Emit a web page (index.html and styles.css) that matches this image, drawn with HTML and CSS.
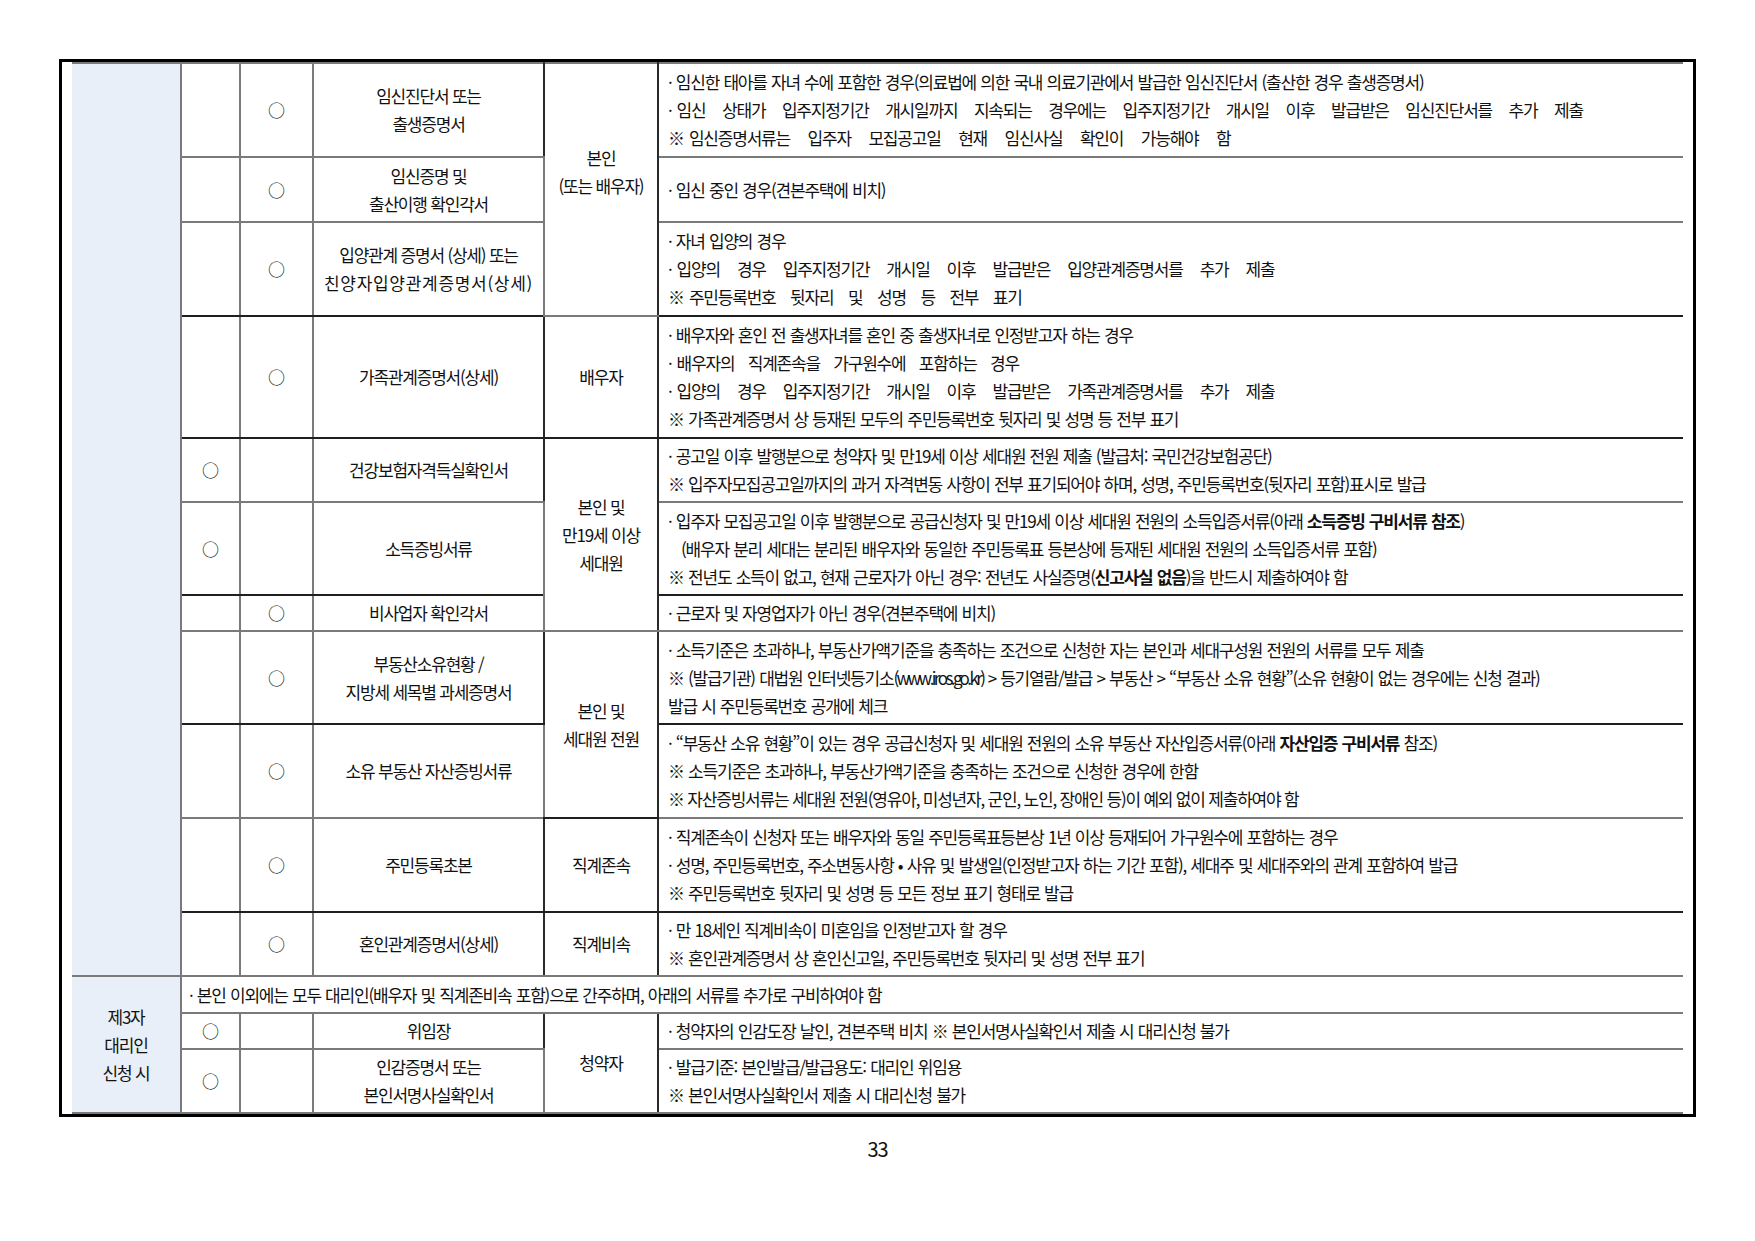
FILE: index.html
```html
<!DOCTYPE html>
<html lang="ko">
<head>
<meta charset="utf-8">
<title>구비서류 33</title>
<link rel="stylesheet" href="styles.css">
</head>
<body>
<div class="page">
  <div class="sheet">
    <table class="docs">
      <colgroup>
        <col class="c-label">
        <col class="c-mark">
        <col class="c-mark2">
        <col class="c-doc">
        <col class="c-who">
        <col class="c-note">
      </colgroup>
      <tbody>
        <tr class="r94">
          <td class="label" rowspan="11"></td>
          <td class="mark"></td>
          <td class="mark">○</td>
          <td class="doc">임신진단서 또는<br>출생증명서</td>
          <td class="who up" rowspan="3">본인<br>(또는 배우자)</td>
          <td class="note">
            <p>· 임신한 태아를 자녀 수에 포함한 경우(의료법에 의한 국내 의료기관에서 발급한 임신진단서 (출산한 경우 출생증명서)</p>
            <p class="ws-a"><span class="bul">· </span>임신 상태가 입주지정기간 개시일까지 지속되는 경우에는 입주지정기간 개시일 이후 발급받은 임신진단서를 추가 제출</p>
            <p class="ws-b"><span class="bul">※ </span>임신증명서류는 입주자 모집공고일 현재 임신사실 확인이 가능해야 함</p>
          </td>
        </tr>
        <tr class="r65">
          <td class="mark"></td>
          <td class="mark">○</td>
          <td class="doc">임신증명 및<br>출산이행 확인각서</td>
          <td class="note"><p>· 임신 중인 경우(견본주택에 비치)</p></td>
        </tr>
        <tr class="r94 dk">
          <td class="mark"></td>
          <td class="mark">○</td>
          <td class="doc">입양관계 증명서 (상세) 또는<br><span class="ws-c">친양자입양관계증명서(상세)</span></td>
          <td class="note">
            <p>· 자녀 입양의 경우</p>
            <p class="ws-f"><span class="bul">· </span>입양의 경우 입주지정기간 개시일 이후 발급받은 입양관계증명서를 추가 제출</p>
            <p class="ws-e"><span class="bul">※ </span>주민등록번호 뒷자리 및 성명 등 전부 표기</p>
          </td>
        </tr>
        <tr class="r122 dk">
          <td class="mark"></td>
          <td class="mark">○</td>
          <td class="doc">가족관계증명서(상세)</td>
          <td class="who">배우자</td>
          <td class="note">
            <p>· 배우자와 혼인 전 출생자녀를 혼인 중 출생자녀로 인정받고자 하는 경우</p>
            <p class="ws-d"><span class="bul">· </span>배우자의 직계존속을 가구원수에 포함하는 경우</p>
            <p class="ws-f"><span class="bul">· </span>입양의 경우 입주지정기간 개시일 이후 발급받은 가족관계증명서를 추가 제출</p>
            <p>※ 가족관계증명서 상 등재된 모두의 주민등록번호 뒷자리 및 성명 등 전부 표기</p>
          </td>
        </tr>
        <tr class="r64">
          <td class="mark">○</td>
          <td class="mark"></td>
          <td class="doc">건강보험자격득실확인서</td>
          <td class="who" rowspan="3">본인 및<br>만19세 이상<br>세대원</td>
          <td class="note">
            <p>· 공고일 이후 발행분으로 청약자 및 만19세 이상 세대원 전원 제출 (발급처: 국민건강보험공단)</p>
            <p>※ 입주자모집공고일까지의 과거 자격변동 사항이 전부 표기되어야 하며, 성명, 주민등록번호(뒷자리 포함)표시로 발급</p>
          </td>
        </tr>
        <tr class="r93 dk">
          <td class="mark">○</td>
          <td class="mark"></td>
          <td class="doc">소득증빙서류</td>
          <td class="note">
            <p>· 입주자 모집공고일 이후 발행분으로 공급신청자 및 만19세 이상 세대원 전원의 소득입증서류(아래 <b>소득증빙 구비서류 참조</b>)</p>
            <p class="indent">(배우자 분리 세대는 분리된 배우자와 동일한 주민등록표 등본상에 등재된 세대원 전원의 소득입증서류 포함)</p>
            <p>※ 전년도 소득이 없고, 현재 근로자가 아닌 경우: 전년도 사실증명(<b>신고사실 없음</b>)을 반드시 제출하여야 함</p>
          </td>
        </tr>
        <tr class="r36">
          <td class="mark"></td>
          <td class="mark">○</td>
          <td class="doc">비사업자 확인각서</td>
          <td class="note"><p>· 근로자 및 자영업자가 아닌 경우(견본주택에 비치)</p></td>
        </tr>
        <tr class="r93 dk">
          <td class="mark"></td>
          <td class="mark">○</td>
          <td class="doc">부동산소유현황 /<br>지방세 세목별 과세증명서</td>
          <td class="who" rowspan="2">본인 및<br>세대원 전원</td>
          <td class="note">
            <p>· 소득기준은 초과하나, 부동산가액기준을 충족하는 조건으로 신청한 자는 본인과 세대구성원 전원의 서류를 모두 제출</p>
            <p>※ (발급기관) 대법원 인터넷등기소<span class="url">(www.iros.go.kr)</span> &gt; 등기열람/발급 &gt; 부동산 &gt; “부동산 소유 현황”(소유 현황이 없는 경우에는 신청 결과)</p>
            <p>발급 시 주민등록번호 공개에 체크</p>
          </td>
        </tr>
        <tr class="r94">
          <td class="mark"></td>
          <td class="mark">○</td>
          <td class="doc">소유 부동산 자산증빙서류</td>
          <td class="note">
            <p>· “부동산 소유 현황”이 있는 경우 공급신청자 및 세대원 전원의 소유 부동산 자산입증서류(아래 <b>자산입증 구비서류</b> 참조)</p>
            <p>※ 소득기준은 초과하나, 부동산가액기준을 충족하는 조건으로 신청한 경우에 한함</p>
            <p class="tight">※ 자산증빙서류는 세대원 전원(영유아, 미성년자, 군인, 노인, 장애인 등)이 예외 없이 제출하여야 함</p>
          </td>
        </tr>
        <tr class="r94 dk">
          <td class="mark"></td>
          <td class="mark">○</td>
          <td class="doc">주민등록초본</td>
          <td class="who">직계존속</td>
          <td class="note">
            <p>· 직계존속이 신청자 또는 배우자와 동일 주민등록표등본상 1년 이상 등재되어 가구원수에 포함하는 경우</p>
            <p>· 성명, 주민등록번호, 주소변동사항 • 사유 및 발생일(인정받고자 하는 기간 포함), 세대주 및 세대주와의 관계 포함하여 발급</p>
            <p>※ 주민등록번호 뒷자리 및 성명 등 모든 정보 표기 형태로 발급</p>
          </td>
        </tr>
        <tr class="r64">
          <td class="mark"></td>
          <td class="mark">○</td>
          <td class="doc">혼인관계증명서(상세)</td>
          <td class="who">직계비속</td>
          <td class="note">
            <p>· 만 18세인 직계비속이 미혼임을 인정받고자 할 경우</p>
            <p>※ 혼인관계증명서 상 혼인신고일, 주민등록번호 뒷자리 및 성명 전부 표기</p>
          </td>
        </tr>
        <tr class="r37">
          <td class="label" rowspan="3">제3자<br>대리인<br>신청 시</td>
          <td class="note wide" colspan="5"><p>· 본인 이외에는 모두 대리인(배우자 및 직계존비속 포함)으로 간주하며, 아래의 서류를 추가로 구비하여야 함</p></td>
        </tr>
        <tr class="r36">
          <td class="mark">○</td>
          <td class="mark"></td>
          <td class="doc">위임장</td>
          <td class="who" rowspan="2">청약자</td>
          <td class="note"><p>· 청약자의 인감도장 날인, 견본주택 비치 ※ 본인서명사실확인서 제출 시 대리신청 불가</p></td>
        </tr>
        <tr class="r64">
          <td class="mark">○</td>
          <td class="mark"></td>
          <td class="doc">인감증명서 또는<br>본인서명사실확인서</td>
          <td class="note">
            <p>· 발급기준: 본인발급/발급용도: 대리인 위임용</p>
            <p>※ 본인서명사실확인서 제출 시 대리신청 불가</p>
          </td>
        </tr>
      </tbody>
    </table>
  </div>
  <div class="pageno">33</div>
</div>
</body>
</html>
```

FILE: styles.css
```css
* { box-sizing: border-box; }

html, body {
  margin: 0;
  padding: 0;
  background: #ffffff;
}

body {
  font-family: "Noto Sans CJK KR", "Noto Sans", sans-serif;
  color: #111111;
}

.page {
  padding: 59px 0 0 59px;
  width: 1755px;
}

.sheet {
  width: 1637px;
  border: 3px solid #000000;
  padding: 0 10px;
}

.docs {
  width: 1611px;
  border-collapse: collapse;
  table-layout: fixed;
  border-top: 2px solid #7a7a7a;
  border-bottom: 2px solid #7a7a7a;
  font-size: 17px;
  letter-spacing: -1.2px;
  line-height: 28px;
}

.c-label { width: 109px; }
.c-mark { width: 59px; }
.c-mark2 { width: 73px; }
.c-doc { width: 231px; }
.c-who { width: 114px; }
.c-note { width: 1025px; }

.docs td {
  border: 2px solid #7a7a7a;
  padding: 0 4px;
  vertical-align: middle;
  text-align: center;
}

.r36 { height: 36px; }
.r37 { height: 37px; }
.r64 { height: 64px; }
.r65 { height: 65px; }
.r93 { height: 93px; }
.r94 { height: 94px; }
.r122 { height: 122px; }

.docs tr.dk td { border-bottom-color: #1f1f1f; }

.docs td.label {
  background: #e9eff8;
  border-left: 0 none;
  padding: 0;
}

.docs td.mark {
  font-size: 17px;
  letter-spacing: 0;
}

.docs td.doc { border-right-color: #2a2a2a; }
.docs td.who { border-right-color: #2a2a2a; }
.docs td.up { padding-bottom: 35px; }

.docs td.note {
  text-align: left;
  padding: 0 6px 0 9px;
  border-right: 0 none;
  word-spacing: 0.7px;
}

.docs td.wide { padding-left: 7px; }

.note p {
  margin: 0;
  white-space: nowrap;
}

.note p.indent { padding-left: 13px; }
.note p.tight { word-spacing: 0; }

.note b { font-weight: 700; }

.note .url { letter-spacing: -2.6px; }

.note p.ws-a { word-spacing: 13px; }
.note p.ws-b { word-spacing: 14px; }
.note p.ws-d { word-spacing: 9.8px; }
.note p.ws-e { word-spacing: 11px; }
.note p.ws-f { word-spacing: 13.4px; }
.note p .bul { word-spacing: 1.5px; }
.ws-c { letter-spacing: 0.7px; }

.pageno {
  width: 1637px;
  margin-top: 20px;
  text-align: center;
  font-size: 20px;
  line-height: 24px;
  letter-spacing: -1px;
  color: #111111;
}
```
